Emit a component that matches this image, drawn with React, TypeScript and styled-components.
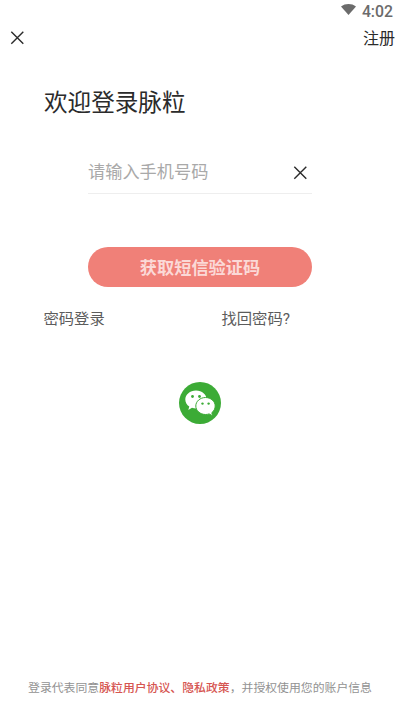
import React from 'react';
import styled, { createGlobalStyle } from 'styled-components';

const GlobalStyle = createGlobalStyle`
  * { box-sizing: border-box; }
  body {
    margin: 0;
    background: #fff;
    font-family: Roboto, "Noto Sans CJK SC", sans-serif;
    color: #2b2b2b;
  }
  button { font: inherit; color: inherit; border: 0; padding: 0; background: none; }
`;

const Screen = styled.main`
  width: 400px;
  height: 712px;
  display: flex;
  flex-direction: column;
  background: #fff;
  overflow: hidden;
`;

const StatusBar = styled.div`
  height: 20px;
  padding: 3px 7px 0 0;
  display: flex;
  justify-content: flex-end;
  align-items: center;
  gap: 6px;
  font: 500 15.8px/20px Roboto, sans-serif;
  color: #6b6b6b;
  svg { margin-bottom: 4px; }
`;

const NavBar = styled.header`
  height: 36px;
  padding: 1px 5px 0 10px;
  display: flex;
  justify-content: space-between;
  align-items: center;
  font-size: 16px;
  line-height: 24px;
`;

const IconButton = styled.button<{ $lift?: number }>`
  display: flex;
  && { padding-bottom: ${({ $lift = 0 }) => $lift}px; }
`;

const Title = styled.h1`
  margin: 29px 0 0 44px;
  font-size: 23.6px;
  font-weight: 400;
  line-height: 36px;
`;

const PhoneField = styled.div`
  margin: 31px 88px 0;
  height: 42px;
  padding-right: 5px;
  border-bottom: 1px solid #eee;
  display: flex;
  align-items: center;
  justify-content: space-between;
`;

const PhoneInput = styled.input`
  width: 180px;
  padding: 0 0 1px;
  border: 0;
  outline: 0;
  background: none;
  font: 17.2px/26px Roboto, "Noto Sans CJK SC", sans-serif;
  &::placeholder { color: #a9a9a9; opacity: 1; }
`;

const SubmitButton = styled.button`
  && {
    margin: 53px 88px 0;
    height: 40px;
    padding-bottom: 1px;
    flex: none;
    border-radius: 20px;
    background: #f08078;
    color: #fbd9d7;
    font-size: 17.2px;
    font-weight: 700;
  }
`;

const LinkRow = styled.div`
  margin: 20px 0 0 43.5px;
  display: grid;
  grid-template-columns: 178px 1fr;
  font-size: 15.3px;
  line-height: 24px;
  color: #5c5c5c;
`;

const WechatButton = styled.button`
  && {
    margin: 51px auto 0;
    width: 42px;
    height: 42px;
    flex: none;
    border-radius: 50%;
    background: #3cab36;
    display: flex;
  }
`;

const Agreement = styled.footer`
  margin: auto 0 15px;
  text-align: center;
  white-space: nowrap;
  font-size: 11.87px;
  line-height: 18px;
  color: #929292;
`;

const Policy = styled.span`
  color: #d65551;
  font-weight: 500;
`;

const CloseIcon = () => (
  <svg width="14" height="14" viewBox="0 0 14 14" fill="none" stroke="#2b2b2b" strokeWidth="1.4">
    <path d="M1.300 .8 13.300 12.800M13.300 .8 1.300 12.800" />
  </svg>
);

const WifiIcon = () => (
  <svg width="15" height="11" viewBox="0 0 15 11" fill="#6b6b6b">
    <path d="M0 2.500C4.300-.8 10.700-.8 15 2.500L7.500 11Z" />
  </svg>
);

const WechatIcon = () => (
  <svg width="42" height="42" viewBox="0 0 42 42">
    <path fill="#fff" d="M17 8.500C11 8.500 6.300 12.500 6.300 17.500c0 2.900 1.500 5.400 4 7.100L9.300 28l3.700-2.200c1.300.4 2.600.6 4 .6 6 0 10.700-4 10.700-8.900S23 8.500 17 8.500Z" />
    <path fill="#fff" stroke="#3cab36" strokeWidth="1" d="M26.500 15.500c-5.300 0-9.700 3.800-9.700 8.500s4.400 8.500 9.700 8.500c1.300 0 2.500-.2 3.600-.6l3.600 2-.9-3.200c2.100-1.600 3.400-4 3.400-6.700 0-4.700-4.400-8.500-9.700-8.500Z" />
    <g fill="#3cab36"><circle cx="13.500" cy="14.500" r="1.400" /><circle cx="20.500" cy="14.500" r="1.400" /><circle cx="23.500" cy="21.600" r="1.200" /><circle cx="29.600" cy="21.600" r="1.200" /></g>
  </svg>
);

export default function App() {
  return (
    <>
      <GlobalStyle />
      <Screen>
        <StatusBar><WifiIcon />4:02</StatusBar>
        <NavBar>
          <IconButton aria-label="关闭" $lift={2}><CloseIcon /></IconButton>
          <button>注册</button>
        </NavBar>
        <Title>欢迎登录脉粒</Title>
        <PhoneField>
          <PhoneInput type="tel" placeholder="请输入手机号码" />
          <IconButton aria-label="清除"><CloseIcon /></IconButton>
        </PhoneField>
        <SubmitButton>获取短信验证码</SubmitButton>
        <LinkRow><span>密码登录</span><span>找回密码?</span></LinkRow>
        <WechatButton aria-label="微信登录"><WechatIcon /></WechatButton>
        <Agreement>登录代表同意<Policy>脉粒用户协议、隐私政策</Policy>，并授权使用您的账户信息</Agreement>
      </Screen>
    </>
  );
}
